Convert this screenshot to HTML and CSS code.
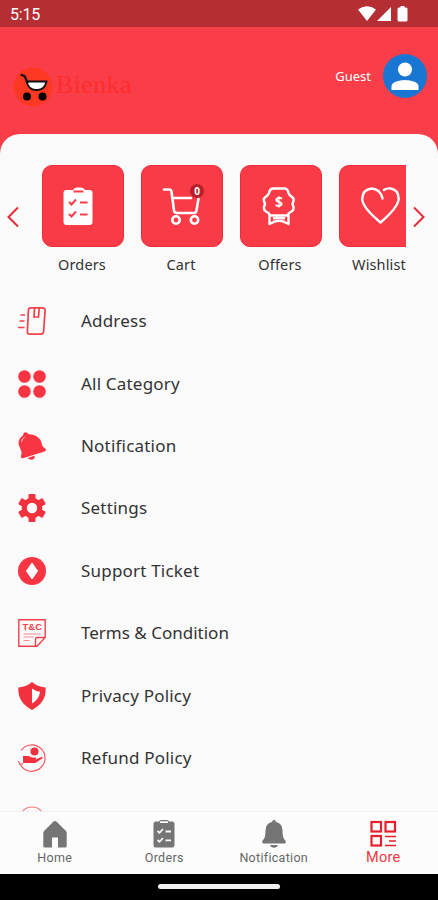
FILE: index.html
```html
<!DOCTYPE html>
<html lang="en">
<head>
  <meta charset="UTF-8" />
  <meta name="viewport" content="width=device-width, initial-scale=1.0"/>
  <title>More</title>
  <link rel="stylesheet" href="styles.css">
</head>
<body>

<div class="status-bar">
  <span class="clock">5:15</span>
  <svg class="status-icons" width="52" height="18" viewBox="0 0 52 18" fill="#fff">
    <path d="M0 4.5Q9-2 18 4.500L9 16z"/>
    <path d="M33 2v14H19z"/>
    <path d="M42.500 1h4v1.500H48q1.500 0 1.500 1.500v11q0 1.500-1.500 1.500h-7q-1.500 0-1.500-1.500V4q0-1.500 1.500-1.500h1.500z"/>
  </svg>
</div>

<header>
  <div class="logo">
    <svg width="40" height="40" viewBox="0 0 40 40">
      <circle cx="20" cy="20" r="19.500" fill="#ff3823"/>
      <path d="M13.500 14.500h20q-2 8.500-9 8.500h-2q-6.500 0-9-8.500z" fill="#fff" stroke="#111" stroke-width="1.800"/>
      <path d="M8.500 8l3 1 3 6.500" fill="none" stroke="#111" stroke-width="2.200" stroke-linecap="round"/>
      <circle cx="14" cy="29.500" r="4" fill="#000"/>
      <circle cx="29.500" cy="29.500" r="4" fill="#000"/>
    </svg>
    <span class="logo-name">Bienka</span>
  </div>
  <div class="user">
    <span>Guest</span>
    <svg width="44" height="44" viewBox="0 0 44 44">
      <circle cx="22" cy="22" r="22" fill="#1976d2"/>
      <circle cx="22" cy="15.500" r="7" fill="#fff"/>
      <path d="M8.500 36v-3.500q0-3 4-4.700Q17 26 22 26t9.500 1.800q4 1.700 4 4.700V36z" fill="#fff"/>
    </svg>
  </div>
</header>

<main>
  <section class="shortcuts">
    <svg class="arrow" width="12" height="22" viewBox="0 0 12 22"><path d="M11 1.500L1.500 11 11 20.500"/></svg>
    <div class="tiles">
      <div class="tile">
        <div class="tile-box">
          <svg width="40" height="40" viewBox="0 0 40 40">
            <path d="M5.500 4h4.500q1-2.500 4-2.500h4q3 0 4 2.500h4.500Q29.500 4 29.500 7v29q0 3-3 3h-23q-3 0-3-3V7q0-3 3-3z" fill="#fff"/>
            <path d="M10.500 5.500h10M6 16l2.500 2.500 4.500-5M17 16.500h7.500M6 28l2.500 2.500 4.500-5M17 28.500h7.500" fill="none" stroke="#f93b47" stroke-width="2"/>
          </svg>
        </div>
        <p>Orders</p>
      </div>
      <div class="tile">
        <div class="tile-box">
          <svg width="40" height="40" viewBox="0 0 40 40" fill="none" stroke="#fff" stroke-width="2.600" stroke-linecap="round" stroke-linejoin="round">
            <path d="M2 3.500h5q2 0 2.500 2l2.500 19q.5 2.500 3 2.500h17q2 0 2.500-2.500l2-12M11 12h18"/>
            <circle cx="14" cy="34" r="3.700"/>
            <circle cx="32.500" cy="34" r="3.700"/>
          </svg>
          <span class="badge">0</span>
        </div>
        <p>Cart</p>
      </div>
      <div class="tile">
        <div class="tile-box">
          <svg width="40" height="40" viewBox="0 0 40 40" fill="none" stroke="#fff" stroke-width="2.400" stroke-linejoin="round">
            <path d="M11.500 2.500h13q2.500 1 3 4.500.5 2 3.500 4 2.500 2 1.500 4l-1 3 1 3q.5 3-2 4.500-3.500 1.500-4 4H9q-.5-2.500-4-4-2.500-1.500-2-4.500l1-3-1-3q-1-2 1.500-4 3-2 3.500-4 .5-3.500 3.500-4.500z"/>
            <path d="M8.500 28.500V38l4.500-2.200q5-2 10 0l4.500 2.200v-9.500M12 32.500q6-1.500 12 0"/>
          </svg>
          <span class="dollar">$</span>
        </div>
        <p>Offers</p>
      </div>
      <div class="tile">
        <div class="tile-box">
          <svg width="40" height="40" viewBox="0 0 40 40" fill="none" stroke="#fff" stroke-width="2.400" stroke-linecap="round" stroke-linejoin="round">
            <path d="M22.500 12.500Q20.500 3 11.500 2.500 2.500 3.500 2.200 13 2.500 21.500 20.500 36.500 38 21.500 38.700 13 38.500 3.500 30.500 2.500q-4-.5-6.500 1.500"/>
          </svg>
        </div>
        <p>Wishlist</p>
      </div>
    </div>
    <svg class="arrow" width="12" height="22" viewBox="0 0 12 22"><path d="M1 1.500L10.500 11 1 20.500"/></svg>
  </section>

  <ul class="menu">
    <li>
      <svg viewBox="0 0 28 28" fill="none" stroke="#f2404b" stroke-width="1.700">
        <path d="M12.500.9h12q2.800 0 2.600 2.500l-1.500 21q-.3 2.700-2.600 2.700H11.500q-2.300 0-2.100-2.700l1-21q.2-2.500 2.100-2.500zM16.500 1.500l-.5 8.500h4.500l.7-8.500M2.500 8h4.500M1.500 14h5M0 20.500h6.500"/>
      </svg>
      <span>Address</span>
    </li>
    <li>
      <svg viewBox="0 0 28 28" fill="#f93543">
        <circle cx="6.500" cy="6.500" r="6.300"/><circle cx="21.500" cy="6.500" r="6.300"/>
        <circle cx="6.500" cy="21.500" r="6.300"/><circle cx="21.500" cy="21.500" r="6.300"/>
      </svg>
      <span>All Category</span>
    </li>
    <li>
      <svg viewBox="0 0 28 28" fill="#f93543">
        <path d="M5 3.500Q5.500 0 8 .3L11 2.200Q19 2.500 22.500 8q1.500 3.500 2.200 6.500l3 2.500q.8 2-1.200 2.600L5 26.300q-2.400.4-2-2l.7-4Q2.500 17 .8 13 -.5 7 5 3.500z"/>
        <path d="M9.500 26l7-2.200q.8 3.200-2 3.800-3 .6-5-1.600z"/>
        <path d="M3.500 9.500Q3.800 6.800 6.200 5.500" fill="none" stroke="#fdc" stroke-width="1" stroke-linecap="round"/>
      </svg>
      <span>Notification</span>
    </li>
    <li>
      <svg viewBox="0 0 28 28">
        <g fill="#f2303e">
          <circle cx="14" cy="14" r="10.300"/>
          <rect x="10.500" y="0" width="7" height="28" rx="1.200"/>
          <rect x="10.500" y="0" width="7" height="28" rx="1.200" transform="rotate(60 14 14)"/>
          <rect x="10.500" y="0" width="7" height="28" rx="1.200" transform="rotate(120 14 14)"/>
        </g>
        <circle cx="14" cy="14" r="5.200" fill="#fafafa"/>
      </svg>
      <span>Settings</span>
    </li>
    <li>
      <svg viewBox="0 0 28 28">
        <circle cx="14" cy="14" r="14" fill="#f93543"/>
        <path d="M14 6l5.500 8-5.500 8-5.500-8z" fill="#fff" stroke="#fff" stroke-linejoin="round"/>
      </svg>
      <span>Support Ticket</span>
    </li>
    <li>
      <svg viewBox="0 0 28 28" fill="none" stroke="#f2404b" stroke-width="1.400">
        <path d="M.8.800h26.400v17.700L19 27.200H.8zM27 18.500h-7.500q-2 0-2 2V27"/>
        <path d="M5.500 15h17M5.500 18h10M5.500 21.500h6" stroke="#f9868d" stroke-width="1.200"/>
        <text class="tc" x="4.500" y="11">T&amp;C</text>
      </svg>
      <span class="tight">Terms &amp; Condition</span>
    </li>
    <li>
      <svg viewBox="0 0 28 28">
        <path d="M14 0q5 4.500 13.500 5.500Q29 20 14 28-1 20 .5 5.500 9 4.500 14 0z" fill="#f2303e"/>
        <path d="M14 6.500q3 2.500 8 3.200Q21.500 17 14 21.500z" fill="#fff"/>
      </svg>
      <span>Privacy Policy</span>
    </li>
    <li>
      <svg viewBox="0 0 28 28">
        <path d="M3 6.500A13.200 13.200 0 1 1 2 20M.5 17l1.500 3.500 3-1" fill="none" stroke="#f2505a" stroke-width="1.100"/>
        <circle cx="16.500" cy="7.500" r="4" fill="#f2303e"/>
        <path d="M5 12h5q2 0 4 1.500h3.500q1.500 1 0 2l6-2.500q2 0 1 1.300L17.500 19H5z" fill="#f2303e"/>
      </svg>
      <span>Refund Policy</span>
    </li>
    <li>
      <svg viewBox="0 0 28 28"><circle cx="14" cy="14" r="13" fill="none" stroke="#f5757d" stroke-width="1.200"/></svg>
    </li>
  </ul>
</main>

<nav>
  <a>
    <svg viewBox="0 0 28 28" fill="#757575"><path d="M14 1q1 0 2 1l9 9q.7.8.7 2v13q0 1.500-1.500 1.500H17v-10h-6v10H3.800q-1.500 0-1.500-1.500V13q0-1.200.7-2l9-9q1-1 2-1z"/></svg>
    <span>Home</span>
  </a>
  <a>
    <svg viewBox="0 0 28 28">
      <path d="M6 1.500h3Q9.500 0 11 0h6q1.500 0 2 1.500h3q2.500 0 2.500 2.500v21q0 2.500-2.500 2.500H6q-2.500 0-2.500-2.500V4Q3.500 1.500 6 1.500z" fill="#757575"/>
      <path d="M10 2.200h8M7.500 11l2 1.800 3.500-3.800M15.500 11.500h5.500M7.500 20l2 1.800L13 18M15.500 20.300h5.500" fill="none" stroke="#fafafa" stroke-width="1.800"/>
    </svg>
    <span>Orders</span>
  </a>
  <a>
    <svg viewBox="0 0 28 28" fill="#757575">
      <path d="M14 0q1.800 0 2 2 6.500 1.500 6.500 8.500 0 7.500 2.500 9.500.8.800.8 2 0 1.500-1.500 1.500H3.700q-1.500 0-1.500-1.500 0-1.200.8-2 2.500-2 2.500-9.500Q5.500 3.500 12 2q.2-2 2-2zM10 25h8q-1 2.800-4 2.800T10 25z"/>
    </svg>
    <span>Notification</span>
  </a>
  <a class="active">
    <svg viewBox="0 0 28 28" fill="none" stroke="#e8202d" stroke-width="2.200">
      <rect x="2.500" y="2" width="9.500" height="9.500"/><rect x="16.500" y="2" width="9.500" height="9.500"/><rect x="2.500" y="16" width="9.500" height="9.500"/>
      <path d="M16 16.500h11M20 21h7M16 25.500h11" stroke-width="1.700"/>
    </svg>
    <span>More</span>
  </a>
</nav>

<div class="gesture-bar"><i></i></div>

</body>
</html>
```
FILE: styles.css
```css
* {
  box-sizing: border-box;
}

body {
  font-family: 'Noto Sans', 'Open Sans', sans-serif;
  margin: 0;
  height: 100vh;
  display: flex;
  flex-direction: column;
  background: #f93d49;
  color: #333;
  overflow: hidden;
}

svg {
  display: block;
  flex-shrink: 0;
}

.status-bar {
  height: 27px;
  flex-shrink: 0;
  background: #b52e34;
  color: #fff;
  display: flex;
  align-items: center;
  justify-content: space-between;
  padding: 0 28px 0 10px;
}

.clock {
  font: 16px/20px Roboto, sans-serif;
  letter-spacing: -0.2px;
  margin-top: 2px;
}

header {
  height: 107px;
  flex-shrink: 0;
  display: flex;
  justify-content: space-between;
  align-items: flex-start;
  padding: 27px 11px 0 13px;
}

.logo {
  display: flex;
  align-items: center;
  margin-top: 13px;
}

.logo-name {
  font: 26px/30px 'Liberation Serif', serif;
  letter-spacing: 0.4px;
  color: #ff2e2b;
  margin: -5px 0 0 3px;
}

.user {
  display: flex;
  align-items: center;
  gap: 12px;
  color: #fff;
  font-size: 13px;
}

main {
  flex: 1;
  min-height: 0;
  overflow: hidden;
  background: #fafafa;
  border-radius: 20px 20px 0 0;
  padding-top: 31px;
}

.shortcuts {
  display: flex;
  height: 125px;
  padding: 0 13px 0 7px;
}

.arrow {
  margin-top: 41px;
  fill: none;
  stroke: #e62b36;
  stroke-width: 2;
}

.tiles {
  display: flex;
  gap: 17px;
  flex: 1;
  overflow: hidden;
  margin: 0 7px 0 15px;
  padding-left: 8px;
}

.tile {
  width: 82px;
  flex-shrink: 0;
}

.tile-box {
  position: relative;
  height: 82px;
  border-radius: 10px;
  background: #f93b47;
  border: 1px solid #ee2c38;
  display: flex;
  align-items: center;
  justify-content: center;
}

.tile p {
  margin: 6px 2px 0 0;
  font-size: 14.5px;
  line-height: 22px;
  letter-spacing: 0.15px;
  text-align: center;
  white-space: nowrap;
}

.badge {
  position: absolute;
  top: 18px;
  right: 18px;
  width: 14px;
  height: 14px;
  border-radius: 50%;
  background: #b5202a;
  color: #fff;
  font-size: 10px;
  font-weight: bold;
  line-height: 14px;
  text-align: center;
}

.dollar {
  position: absolute;
  top: 27px;
  left: 0;
  width: 76px;
  color: #fff;
  font-size: 14px;
  font-weight: bold;
  line-height: 18px;
  text-align: center;
}

.menu {
  list-style: none;
  margin: 0;
  padding: 0 18px;
}

.menu li {
  display: flex;
  align-items: center;
  gap: 35px;
  height: 62.4px;
  font-size: 17px;
  line-height: 24px;
  letter-spacing: 0.2px;
}

.menu .tight {
  letter-spacing: 0;
}

.menu svg {
  width: 28px;
  height: 28px;
}

.tc {
  font: bold 9.5px 'Liberation Sans', sans-serif;
  letter-spacing: 0;
  fill: #f2404b;
  stroke: none;
}

nav {
  height: 63px;
  flex-shrink: 0;
  display: grid;
  grid-template-columns: repeat(4, 1fr);
  background: #fcfcfc;
  border-top: 1px solid #f1f1f1;
}

nav a {
  display: flex;
  flex-direction: column;
  align-items: center;
  padding-top: 8px;
  color: #666;
  font: 12.5px/19px Roboto, sans-serif;
  letter-spacing: 0.3px;
}

nav svg {
  width: 28px;
  height: 28px;
}

nav .active {
  color: #ee3743;
  font-size: 14.5px;
}

.gesture-bar {
  height: 26px;
  flex-shrink: 0;
  background: #000;
  display: flex;
  justify-content: center;
  padding-top: 10px;
}

.gesture-bar i {
  width: 122px;
  height: 5px;
  border-radius: 3px;
  background: #f0f0f0;
}
```
